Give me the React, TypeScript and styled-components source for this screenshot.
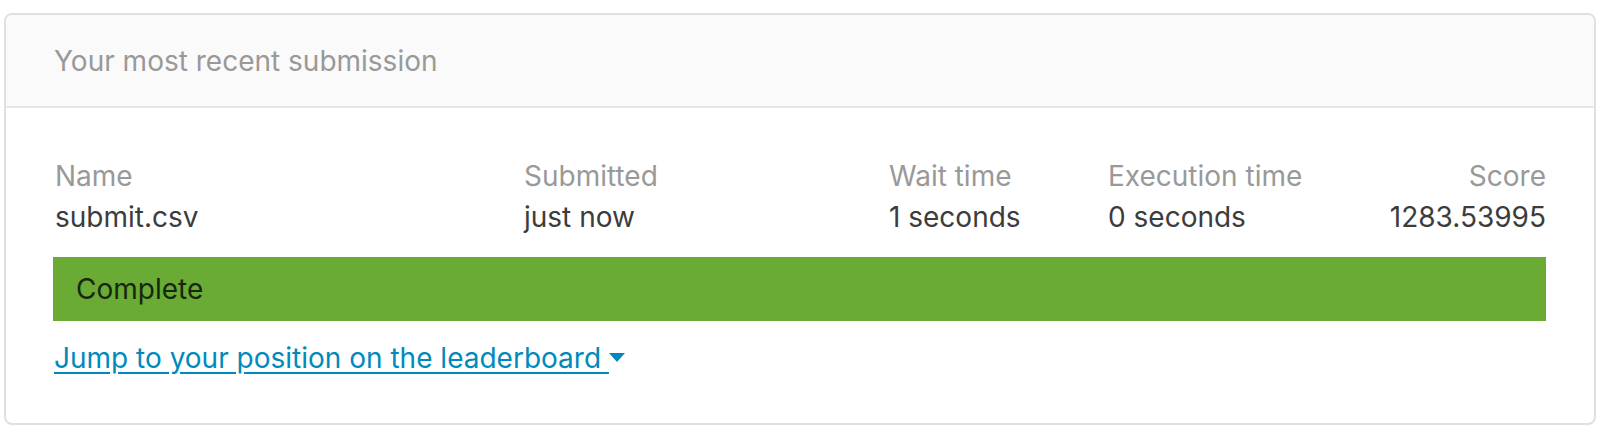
import styled, { createGlobalStyle } from "styled-components"

const GlobalStyle = createGlobalStyle`
    html, body {
        margin: 0;
        padding: 0;
        background: #ffffff;
        font-family: Inter, "Noto Sans", sans-serif;
    }
`

const columns = [
    { label: "Name", value: "submit.csv" },
    { label: "Submitted", value: "just now" },
    { label: "Wait time", value: "1 seconds" },
    { label: "Execution time", value: "0 seconds" },
    { label: "Score", value: "1283.53995", right: true },
]

export default function App() {
    return <Page>
        <GlobalStyle />
        <Card>
            <Header>Your most recent submission</Header>
            <Body>
                <Stats>
                    {columns.map(c =>
                        <Stat key={c.label} $right={c.right}>
                            <Label>{c.label}</Label>
                            <Value>{c.value}</Value>
                        </Stat>
                    )}
                </Stats>
                <StatusBar>Complete</StatusBar>
                <JumpLink href="#">
                    Jump to your position on the leaderboard{"\u00a0"}
                    <Caret viewBox="0 0 16 10"><path d="M0 0h16L8 9z" /></Caret>
                </JumpLink>
            </Body>
        </Card>
    </Page>
}

const Page = styled.div`
    padding: 13px 6px 10px 4px;
`

const Card = styled.section`
    border: 2px solid #e0e0e0;
    border-radius: 8px;
    overflow: hidden;
`

const Header = styled.div`
    background: #fafafa;
    border-bottom: 2px solid #e6e6e6;
    padding: 26px 48px 25px;
    font-size: 28px;
    line-height: 40px;
    color: #999999;
`

const Body = styled.div`
    padding: 48px 48px 45px 47px;
`

const Stats = styled.div`
    display: grid;
    grid-template-columns: 469px 365px 219px 1fr auto;
`

const Stat = styled.div<{ $right?: boolean }>`
    display: flex;
    flex-direction: column;
    align-items: ${p => p.$right ? "flex-end" : "flex-start"};
    padding-left: ${p => p.$right ? "0" : "2px"};
    font-size: 28px;
    line-height: 41px;
`

const Label = styled.span`
    color: #999999;
`

const Value = styled.span`
    color: #3c3c3c;
`

const StatusBar = styled.div`
    margin-top: 19px;
    height: 64px;
    display: flex;
    align-items: center;
    padding-left: 23px;
    background: #69ab35;
    color: #18260e;
    font-size: 28px;
`

const JumpLink = styled.a`
    display: inline-flex;
    align-items: center;
    margin-top: 17px;
    margin-left: 1px;
    font-size: 28px;
    line-height: 40px;
    color: #008abc;
    text-decoration: underline;
    text-underline-offset: 4px;
    white-space: pre;
`

const Caret = styled.svg`
    width: 16px;
    height: 10px;
    fill: #008abc;
`
